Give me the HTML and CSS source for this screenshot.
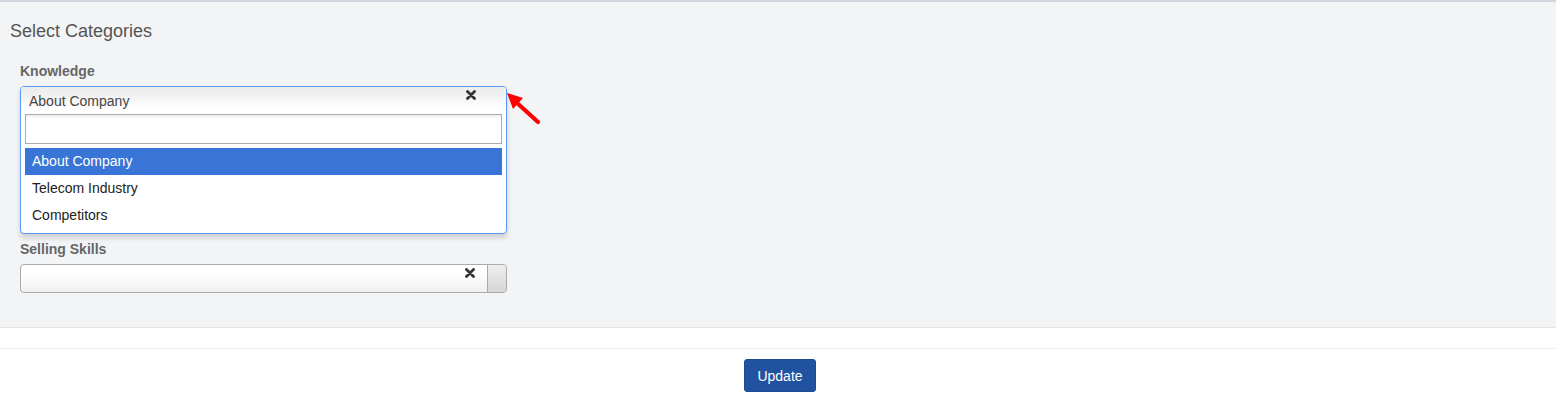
FILE: index.html
```html
<!DOCTYPE html>
<html lang="en">
<head>
  <meta charset="UTF-8">
  <meta name="viewport" content="width=device-width, initial-scale=1.0">
  <title>Select Categories</title>
  <link rel="stylesheet" href="styles.css">
</head>
<body>
  <div class="panel">
    <h3 class="panel-title">Select Categories</h3>

    <div class="form-group">
      <label class="field-label">Knowledge</label>
      <div class="chosen chosen-open">
        <div class="chosen-single">
          <span>About Company</span>
          <svg class="chosen-clear" width="10" height="10" viewBox="0 0 10 10">
            <path d="M1.5 1.5 L8.5 8.5 M8.5 1.5 L1.5 8.5" stroke="#333" stroke-width="2.8" stroke-linecap="round"/>
          </svg>
        </div>
        <div class="chosen-drop">
          <input class="chosen-search" type="text">
          <ul class="chosen-results">
            <li class="highlighted">About Company</li>
            <li>Telecom Industry</li>
            <li>Competitors</li>
          </ul>
        </div>
      </div>
    </div>

    <div class="form-group">
      <label class="field-label">Selling Skills</label>
      <div class="chosen">
        <div class="chosen-single closed">
          <span></span>
          <svg class="chosen-clear" width="10" height="10" viewBox="0 0 10 10">
            <path d="M1.5 1.5 L8.5 8.5 M8.5 1.5 L1.5 8.5" stroke="#333" stroke-width="2.8" stroke-linecap="round"/>
          </svg>
          <div class="chosen-arrow"></div>
        </div>
      </div>
    </div>
  </div>

  <div class="footer">
    <button class="btn-update">Update</button>
  </div>

  <!-- annotation arrow pointing at the open dropdown -->
  <svg class="pointer-arrow" width="40" height="40" viewBox="0 0 40 40">
    <line x1="9" y1="9" x2="31" y2="29" stroke="#f00" stroke-width="4.2" stroke-linecap="round"/>
    <polygon points="0,0 16,5 6,16" fill="#f00"/>
  </svg>
</body>
</html>
```

FILE: styles.css
```css
body {
  margin: 0;
  font-family: "Liberation Sans", Arial, sans-serif;
  color: #333;
  background: #fff;
  position: relative;
}
.panel {
  border-top: 2px solid #cfd6de;
  border-bottom: 1px solid #e6e6e6;
  background-color: #f3f4f6;
  padding: 19px 10px 34px;
}
.panel-title {
  margin: 0 0 21px;
  font-size: 18px;
  line-height: 20px;
  font-weight: normal;
  color: #555;
}
.form-group {
  padding-left: 10px;
  margin-bottom: 6px;
}
.form-group:last-child {
  margin-bottom: 0;
}
.field-label {
  display: block;
  font-size: 14px;
  line-height: 18px;
  font-weight: bold;
  color: #666;
  margin-bottom: 6px;
}
.chosen {
  width: 487px;
  font-size: 14px;
}
.chosen-single {
  position: relative;
  height: 27px;
  box-sizing: border-box;
  border: 1px solid #aaa;
  border-radius: 4px;
  background: linear-gradient(#fff 20%, #f6f6f6 50%, #eee 52%, #f4f4f4 100%);
  padding: 5px 0 0 8px;
  color: #444;
  line-height: 18px;
}
.chosen-single.closed {
  height: 29px;
  background: linear-gradient(#fff 30%, #f0f0f0 100%);
}
.chosen-open {
  border: 1px solid #5897fb;
  border-radius: 4px;
  background: #fff;
  box-shadow: 0 4px 5px rgba(0, 0, 0, 0.15);
  box-sizing: border-box;
}
.chosen-open .chosen-single {
  border: 0;
  border-radius: 3px 3px 0 0;
  height: 27px;
  background: linear-gradient(#eee 20%, #fff 80%);
}
.chosen-clear {
  position: absolute;
  top: 3px;
  left: 444px;
}
.chosen-open .chosen-clear {
  top: 3px;
  left: 445px;
}
.chosen-arrow {
  position: absolute;
  top: 0;
  right: 0;
  width: 18px;
  height: 27px;
  border-left: 1px solid #aaa;
  border-radius: 0 4px 4px 0;
  background: linear-gradient(#eee, #d6d6d6);
}
.chosen-drop {
  padding: 0 4px 4px;
}
.chosen-search {
  display: block;
  width: 100%;
  height: 30px;
  box-sizing: border-box;
  border: 1px solid #aaa;
  margin: 0 0 4px;
  background: linear-gradient(#eee 1%, #fff 15%);
  font-family: inherit;
}
.chosen-results {
  list-style: none;
  margin: 0;
  padding: 0;
}
.chosen-results li {
  height: 27px;
  line-height: 27px;
  padding-left: 7px;
  color: #222;
}
.chosen-results li.highlighted {
  background-color: #3875d7;
  color: #fff;
}
.footer {
  margin-top: 20px;
  border-top: 1px solid #eee;
  padding-top: 10px;
  text-align: center;
}
.btn-update {
  width: 72px;
  height: 33px;
  margin-left: 4px;
  border: 1px solid #1d4a91;
  border-radius: 3px;
  background-color: #2152a0;
  color: #fff;
  font-family: inherit;
  font-size: 14px;
  cursor: pointer;
}
.pointer-arrow {
  position: absolute;
  left: 507px;
  top: 93px;
}
```
